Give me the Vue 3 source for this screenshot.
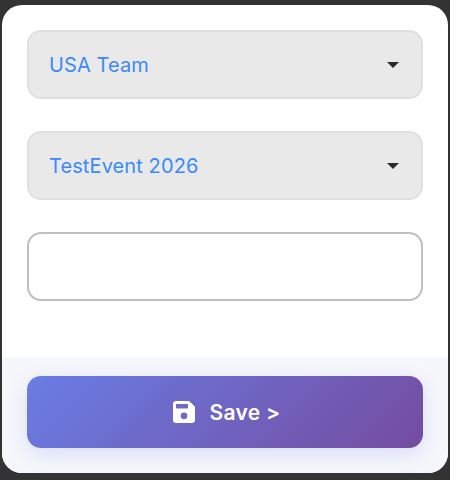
<script setup>
import { ref } from "vue";

const team = ref("USA Team");
const event_name = ref("TestEvent 2026");
const note = ref("");
</script>

<template>
  <div class="page">
    <form class="card" @submit.prevent>
      <div class="fields">
        <div class="select_wrap">
          <select v-model="team" class="field select">
            <option>USA Team</option>
          </select>
          <span class="caret" aria-hidden="true"></span>
        </div>
        <div class="select_wrap">
          <select v-model="event_name" class="field select">
            <option>TestEvent 2026</option>
          </select>
          <span class="caret" aria-hidden="true"></span>
        </div>
        <input v-model="note" class="field text_input" type="text" />
      </div>
      <div class="footer">
        <button class="save_btn" type="submit">
          <svg class="save_icon" viewBox="0 0 22 22" aria-hidden="true">
            <path
              fill="currentColor"
              fill-rule="evenodd"
              d="M3 0H15.2C15.8 0 16.4 .2 16.9 .7L21.3 5.1C21.8 5.6 22 6.2 22 6.8V19C22 20.7 20.7 22 19 22H3C1.3 22 0 20.7 0 19V3C0 1.3 1.3 0 3 0ZM4 3C3.4 3 3 3.4 3 4V6.5C3 7.1 3.4 7.5 4 7.5H14C14.6 7.5 15 7.1 15 6.5V4C15 3.4 14.6 3 14 3ZM11 11.4A3.4 3.4 0 1 0 11 18.2A3.4 3.4 0 1 0 11 11.4Z"
            />
          </svg>
          <span class="save_label">Save &gt;</span>
        </button>
      </div>
    </form>
  </div>
</template>

<style>
html,
body {
  margin: 0;
  background: #333333;
}
</style>

<style scoped>
.page {
  width: 450px;
  height: 480px;
  box-sizing: border-box;
  padding: 5px 2px 7px;
  background: #333333;
  font-family: Inter, "Noto Sans", sans-serif;
}

.card {
  height: 100%;
  display: flex;
  flex-direction: column;
  justify-content: space-between;
  background: #ffffff;
  border-radius: 20px;
  overflow: hidden;
}

.fields {
  display: flex;
  flex-direction: column;
  gap: 32px;
  padding: 25px 25px 0;
}

.select_wrap {
  position: relative;
}

.field {
  display: block;
  width: 100%;
  height: 69px;
  box-sizing: border-box;
  border-radius: 14px;
  outline: none;
  font-family: inherit;
}

.select {
  appearance: none;
  padding: 0 20px;
  border: 2px solid #e0e0e0;
  background: #e9e9e9;
  color: #3b8af7;
  font-size: 20px;
  letter-spacing: 0.1px;
}

.caret {
  position: absolute;
  top: 32px;
  right: 24px;
  width: 0;
  height: 0;
  border-left: 6.5px solid transparent;
  border-right: 6.5px solid transparent;
  border-top: 6.5px solid #2b2b2b;
  pointer-events: none;
}

.text_input {
  border: 2.5px solid #bfbfbf;
  background: #ffffff;
}

.footer {
  height: 116px;
  box-sizing: border-box;
  padding: 19px 25px 25px;
  background: #f6f7fb;
}

.save_btn {
  width: 100%;
  height: 72px;
  display: flex;
  align-items: center;
  justify-content: center;
  gap: 15px;
  padding: 0 0 0 3px;
  border: none;
  border-radius: 14px;
  background: linear-gradient(135deg, #6a7de4 0%, #744ca0 100%);
  box-shadow: 0 6px 20px rgba(102, 126, 234, 0.2);
  color: #ffffff;
  font-family: inherit;
  font-size: 21px;
  font-weight: 600;
}

.save_label {
  letter-spacing: 0.3px;
}

.save_icon {
  width: 22px;
  height: 22px;
}
</style>
